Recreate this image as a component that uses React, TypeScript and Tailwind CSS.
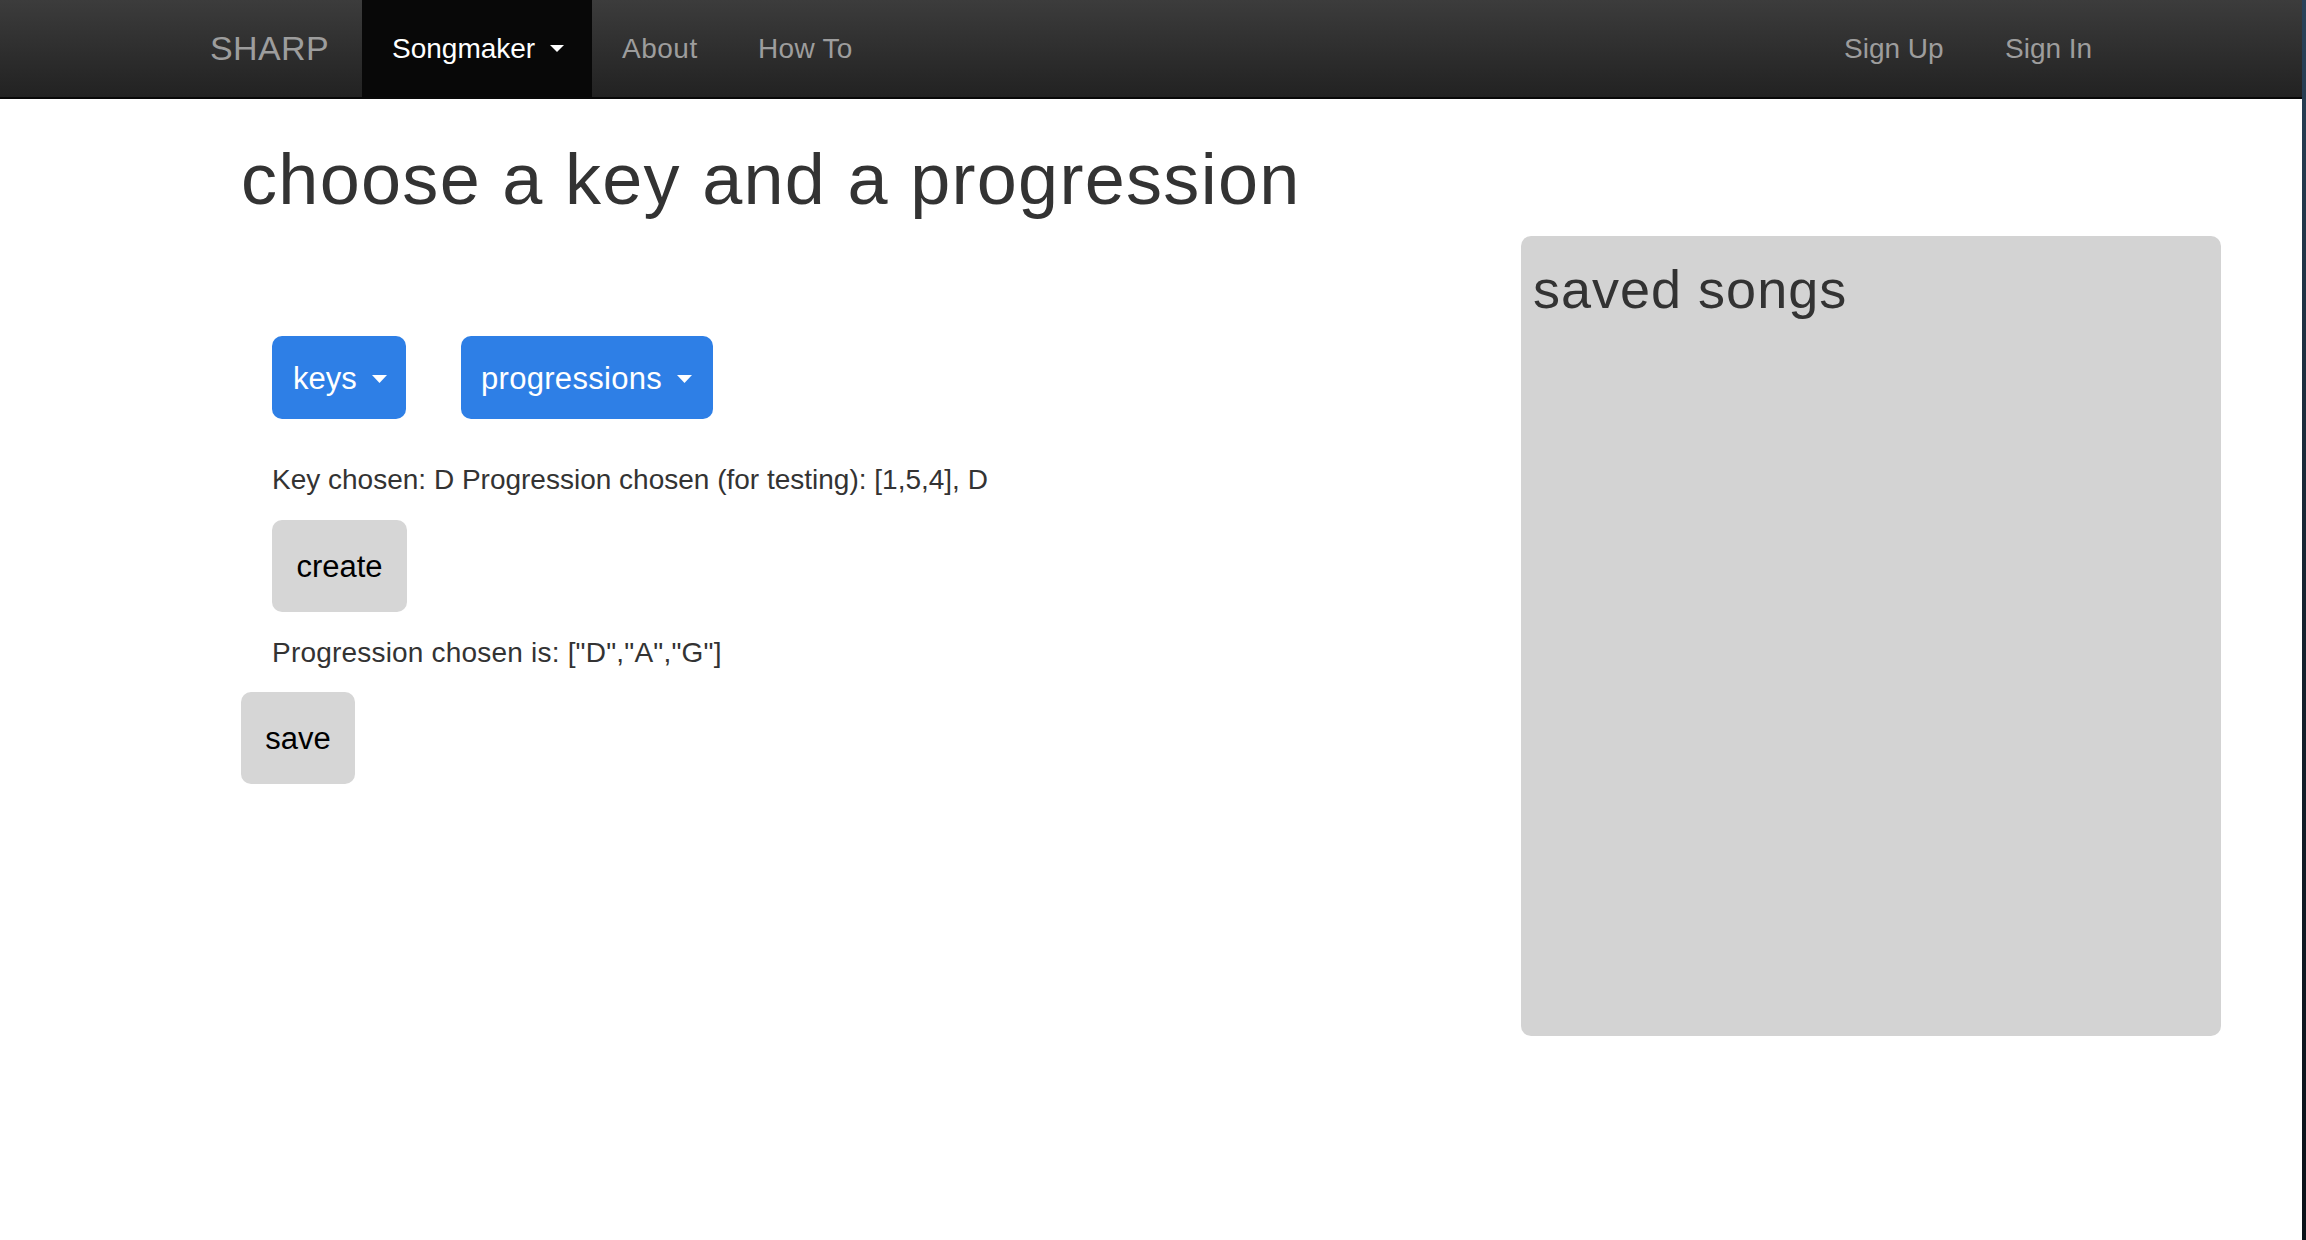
import React from "react";

function Caret({ w, h, color }: { w: number; h: number; color: string }) {
  return (
    <svg width={w} height={h} viewBox={`0 0 ${w} ${h}`} className="block shrink-0">
      <polygon points={`0,0 ${w},0 ${w / 2},${h}`} fill={color} />
    </svg>
  );
}

export default function App() {
  const font = { fontFamily: '"Liberation Sans", Arial, Helvetica, sans-serif' };
  return (
    <div className="flex w-[2306px] h-[1240px] bg-white overflow-hidden" style={font}>
      <div className="w-[2302px] flex flex-col">
        {/* Navbar */}
        <nav className="h-[99px] border-b-2 border-[#080808] bg-gradient-to-b from-[#3c3c3c] to-[#222222] flex items-stretch pl-[180px]">
          <div className="w-[182px] pl-[30px] flex items-center text-[34px] tracking-[0.4px] text-[#9d9d9d]">SHARP</div>
          <div className="w-[230px] pl-[30px] flex items-center gap-[15px] bg-[#080808] text-white text-[28px]">
            <span>Songmaker</span>
            <Caret w={14} h={7} color="#ffffff" />
          </div>
          <div className="w-[136px] pl-[30px] flex items-center text-[28px] tracking-[0.5px] text-[#9d9d9d]">About</div>
          <div className="w-[153px] pl-[30px] flex items-center text-[28px] tracking-[0.3px] text-[#9d9d9d]">How To</div>
          <div className="ml-auto flex items-stretch mr-[182px]">
            <div className="w-[161px] pl-[30px] flex items-center text-[28px] text-[#9d9d9d]">Sign Up</div>
            <div className="w-[145px] pl-[30px] flex items-center text-[28px] text-[#9d9d9d]">Sign In</div>
          </div>
        </nav>

        {/* Body */}
        <div className="pl-[241px] flex flex-col">
          <h1 className="mt-[40px] text-[72px] leading-[80px] tracking-[1.3px] text-[#333333]">
            choose a key and a progression
          </h1>
          <div className="flex items-start">
            <div className="flex-1 flex flex-col items-start">
              <div className="mt-[117px] ml-[31px] flex gap-[55px]">
                <button className="w-[134px] h-[83px] pl-[21px] pt-[3px] rounded-[10px] bg-[#2e7fe6] text-white text-[31px] flex items-center gap-[15px]">
                  <span>keys</span>
                  <Caret w={15} h={8} color="#ffffff" />
                </button>
                <button className="w-[252px] h-[83px] pl-[20px] pt-[3px] rounded-[10px] bg-[#2e7fe6] text-white text-[31px] tracking-[0.3px] flex items-center gap-[15px]">
                  <span>progressions</span>
                  <Caret w={15} h={8} color="#ffffff" />
                </button>
              </div>
              <p className="mt-[41px] ml-[31px] text-[28px] leading-[40px] text-[#333333]">
                Key chosen: D Progression chosen (for testing): [1,5,4], D
              </p>
              <button className="mt-[20px] ml-[31px] w-[135px] h-[92px] pt-[3px] rounded-[10px] bg-[#d6d6d6] text-black text-[31px] flex items-center justify-center">
                create
              </button>
              <p className="mt-[21px] ml-[31px] text-[28px] leading-[40px] tracking-[0.2px] text-[#333333]">
                Progression chosen is: ["D","A","G"]
              </p>
              <button className="mt-[19px] w-[114px] h-[92px] pt-[3px] rounded-[10px] bg-[#d6d6d6] text-black text-[31px] flex items-center justify-center">
                save
              </button>
            </div>
            <div className="mt-[17px] mr-[81px] w-[700px] h-[800px] rounded-[10px] bg-[#d3d3d3] pl-[12px] pt-[23px]">
              <h2 className="text-[54px] leading-[60px] tracking-[1px] text-[#333333]">saved songs</h2>
            </div>
          </div>
        </div>
      </div>
      <div className="w-[4px] bg-gradient-to-b from-[#2a4259] via-[#16222e] to-[#0b1118]" />
    </div>
  );
}
